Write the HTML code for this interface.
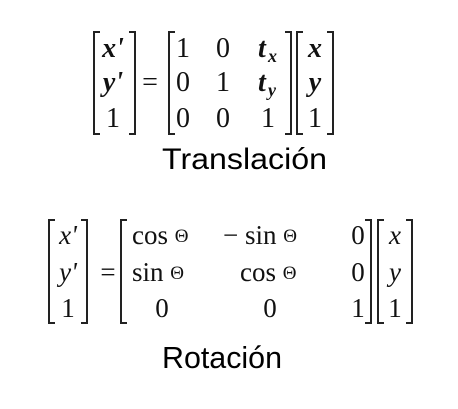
<!DOCTYPE html>
<html><head><meta charset="utf-8"><style>
html,body{margin:0;padding:0;background:#fff;width:458px;height:409px;overflow:hidden}
svg{display:block}
.s{font-family:"Liberation Serif",serif;fill:#111}
.a{font-family:"Liberation Sans",sans-serif;fill:#000}
</style></head><body>
<svg width="458" height="409" viewBox="0 0 458 409" xmlns="http://www.w3.org/2000/svg">
<g stroke="#222" stroke-width="2" fill="none">
<path d="M100 32H94V134H100"/><path d="M129 32H135V134H129"/>
<path d="M175 32H169V134H175"/><path d="M285 32H291V134H285"/>
<path d="M303 32H297V134H303"/><path d="M327 32H333V134H327"/>
<path d="M55 220H49V323H55"/><path d="M81 220H87V323H81"/>
<path d="M127 220H121V323H127"/><path d="M365 220H371V323H365"/>
<path d="M384 220H378V323H384"/><path d="M406 220H412V323H406"/>
</g>
<g class="s" font-size="28" text-anchor="middle">
<text x="113" y="57" font-weight="bold" font-style="italic">x'</text>
<text x="113" y="91" font-weight="bold" font-style="italic">y'</text>
<text x="113" y="127">1</text>
<text x="150" y="91">=</text>
<text x="183" y="57">1</text><text x="223" y="57">0</text>
<text x="183" y="91">0</text><text x="223" y="91">1</text>
<text x="183" y="127">0</text><text x="223" y="127">0</text><text x="268" y="127">1</text>
<text x="315" y="57" font-weight="bold" font-style="italic">x</text>
<text x="315" y="91" font-weight="bold" font-style="italic">y</text>
<text x="315" y="127">1</text>
</g>
<g class="s" font-weight="bold" font-style="italic">
<text x="258" y="57" font-size="28">t</text><text x="268" y="62" font-size="18">x</text>
<text x="258" y="91" font-size="28">t</text><text x="268" y="96" font-size="18">y</text>
</g>
<text class="a" x="162" y="169" font-size="30" textLength="165" lengthAdjust="spacingAndGlyphs">Translación</text>
<g class="s" font-size="27" text-anchor="middle">
<text x="68" y="244" font-style="italic">x'</text>
<text x="68" y="281" font-style="italic">y'</text>
<text x="68" y="317">1</text>
<text x="108" y="281">=</text>
<text x="162" y="317">0</text><text x="270" y="317">0</text><text x="358" y="317">1</text>
<text x="358" y="244">0</text><text x="358" y="281">0</text>
<text x="395" y="244" font-style="italic">x</text>
<text x="395" y="281" font-style="italic">y</text>
<text x="395" y="317">1</text>
</g>
<g class="s" font-size="27">
<text x="132" y="244">cos <tspan font-size="19" dy="-2">Θ</tspan></text>
<text x="223" y="244">− sin <tspan font-size="19" dy="-2">Θ</tspan></text>
<text x="132" y="281">sin <tspan font-size="19" dy="-2">Θ</tspan></text>
<text x="240" y="281">cos <tspan font-size="19" dy="-2">Θ</tspan></text>
</g>
<text class="a" x="162" y="368" font-size="31" textLength="120" lengthAdjust="spacingAndGlyphs">Rotación</text>
</svg>
</body></html>
